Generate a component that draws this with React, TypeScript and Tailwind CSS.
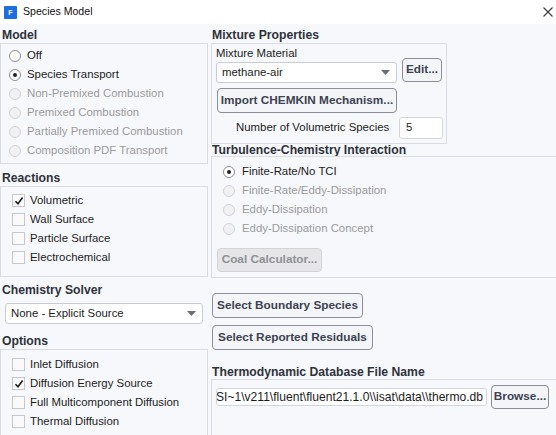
import React from "react";

const dim = "text-[#9b9b9b]";

function Radio({ checked = false, disabled = false }: { checked?: boolean; disabled?: boolean }) {
  return (
    <span
      className={`w-[12px] h-[12px] rounded-full border flex items-center justify-center shrink-0 ${
        disabled ? "border-[#d2d3d7] bg-[#f1f1f3]" : "border-[#8d8f95] bg-white"
      }`}
    >
      {checked && <span className="w-[4px] h-[4px] rounded-full bg-[#222]" />}
    </span>
  );
}

function Check({ checked = false }: { checked?: boolean }) {
  return (
    <span className="w-[13px] h-[13px] border border-[#c6c8ce] bg-[#fafafa] flex items-center justify-center shrink-0">
      {checked && (
        <svg width="10" height="10" viewBox="0 0 10 10">
          <path d="M1.5 5.2 L4 7.8 L8.6 1.6" fill="none" stroke="#1d1d1d" strokeWidth="1.6" />
        </svg>
      )}
    </span>
  );
}

function Caret() {
  return (
    <svg width="9" height="5" viewBox="0 0 9 5">
      <path d="M0 0 H9 L4.5 5 Z" fill="#6b6e75" />
    </svg>
  );
}

function Label({ children, className = "" }: { children: React.ReactNode; className?: string }) {
  return <div className={`font-bold text-[12.2px] text-[#2e323b] pl-[2px] whitespace-nowrap ${className}`}>{children}</div>;
}

function Btn({ children, className = "", disabled = false }: { children: React.ReactNode; className?: string; disabled?: boolean }) {
  return (
    <div
      className={`border rounded-[4px] flex items-center justify-center font-bold text-[11.8px] whitespace-nowrap ${
        disabled ? "border-[#d3d4d8] bg-[#e6e6e8] text-[#8f9196]" : "border-[#8c8f99] bg-[#f4f5f9] text-[#3c4250]"
      } ${className}`}
    >
      {children}
    </div>
  );
}

const models = [
  { t: "Off", c: false, d: false },
  { t: "Species Transport", c: true, d: false },
  { t: "Non-Premixed Combustion", c: false, d: true },
  { t: "Premixed Combustion", c: false, d: true },
  { t: "Partially Premixed Combustion", c: false, d: true },
  { t: "Composition PDF Transport", c: false, d: true },
];

const reactions = [
  { t: "Volumetric", c: true },
  { t: "Wall Surface", c: false },
  { t: "Particle Surface", c: false },
  { t: "Electrochemical", c: false },
];

const options = [
  { t: "Inlet Diffusion", c: false },
  { t: "Diffusion Energy Source", c: true },
  { t: "Full Multicomponent Diffusion", c: false },
  { t: "Thermal Diffusion", c: false },
];

const tci = [
  { t: "Finite-Rate/No TCI", c: true, d: false },
  { t: "Finite-Rate/Eddy-Dissipation", c: false, d: true },
  { t: "Eddy-Dissipation", c: false, d: true },
  { t: "Eddy-Dissipation Concept", c: false, d: true },
];

export default function App() {
  return (
    <div className="w-[556px] h-[435px] overflow-hidden bg-[#f7f8fc] font-['Liberation_Sans',Arial,sans-serif] text-[11.4px] text-[#1c1c1c]">
      {/* title bar */}
      <div className="h-[24px] bg-white flex items-center pl-[4px] pr-[3px]">
        <div className="w-[13px] h-[13px] bg-[#1d6fe0] rounded-[1px] flex items-center justify-center text-white text-[7px] font-bold leading-none">
          F
        </div>
        <span className="ml-[6px] text-[10.6px] text-[#111]">Species Model</span>
        <svg className="ml-auto" width="10" height="10" viewBox="0 0 10 10">
          <path d="M0.5 0.5 L9.5 9.5 M9.5 0.5 L0.5 9.5" stroke="#3a3a3a" strokeWidth="1.1" />
        </svg>
      </div>

      <div className="flex gap-[3px]">
        {/* left column */}
        <div className="w-[208px] shrink-0 flex flex-col">
          <Label className="mt-[4px] h-[15px] leading-[15px]">Model</Label>
          <div className="border border-[#d9dce6] h-[121px] pt-[2px]">
            {models.map((m) => (
              <div key={m.t} className="h-[19px] flex items-center pl-[8px] gap-[6px]">
                <Radio checked={m.c} disabled={m.d} />
                <span className={m.d ? dim : ""}>{m.t}</span>
              </div>
            ))}
          </div>

          <Label className="mt-[7px] h-[15px] leading-[15px]">Reactions</Label>
          <div className="border border-[#d9dce6] h-[91px] pt-[4px]">
            {reactions.map((r) => (
              <div key={r.t} className="h-[19px] flex items-center pl-[11px] gap-[5px]">
                <Check checked={r.c} />
                <span>{r.t}</span>
              </div>
            ))}
          </div>

          <Label className="mt-[6px] h-[15px] leading-[15px]">Chemistry Solver</Label>
          <div className="mt-[5px] ml-[5px] w-[198px] h-[21px] bg-white border border-[#c9ccd6] rounded-[3px] flex items-center pl-[5px] pr-[6px]">
            <span>None - Explicit Source</span>
            <span className="ml-auto">
              <Caret />
            </span>
          </div>

          <Label className="mt-[10px] h-[15px] leading-[15px]">Options</Label>
          <div className="border border-[#d9dce6] h-[100px] pt-[5px]">
            {options.map((o) => (
              <div key={o.t} className="h-[19px] flex items-center pl-[11px] gap-[5px]">
                <Check checked={o.c} />
                <span>{o.t}</span>
              </div>
            ))}
          </div>
        </div>

        {/* right column */}
        <div className="flex-1 flex flex-col -mr-[3px]">
          <Label className="mt-[4px] h-[15px] leading-[15px] !pl-[1px]">Mixture Properties</Label>
          <div className="w-[236px] h-[101px] border border-[#d9dce6] pl-[4px] pt-[2px]">
            <div className="flex items-end">
              <div className="flex flex-col w-[181px]">
                <div className="h-[16px] leading-[15px]">Mixture Material</div>
                <div className="h-[21px] bg-white border border-[#c9ccd6] rounded-[3px] flex items-center pl-[5px] pr-[6px]">
                  <span>methane-air</span>
                  <span className="ml-auto">
                    <Caret />
                  </span>
                </div>
              </div>
              <Btn className="ml-[5px] w-[40px] h-[24px] mb-[1px]">Edit...</Btn>
            </div>
            <Btn className="mt-[5px] ml-[1px] w-[180px] h-[25px]">Import CHEMKIN Mechanism...</Btn>
            <div className="mt-[4px] flex items-center h-[22px]">
              <span className="w-[183px] pl-[20px]">Number of Volumetric Species</span>
              <div className="w-[44px] h-[22px] bg-white border border-[#d4d6de] rounded-[3px] flex items-center pl-[6px]">5</div>
            </div>
          </div>

          <Label className="h-[12px] leading-[12px] !pl-[1px]">Turbulence-Chemistry Interaction</Label>
          <div className="h-[122px] border border-[#d9dce6] pt-[5px]">
            {tci.map((m) => (
              <div key={m.t} className="h-[19px] flex items-center pl-[11px] gap-[7px]">
                <Radio checked={m.c} disabled={m.d} />
                <span className={m.d ? dim : ""}>{m.t}</span>
              </div>
            ))}
            <Btn disabled className="mt-[10px] ml-[5px] w-[105px] h-[24px]">
              Coal Calculator...
            </Btn>
          </div>

          <Btn className="mt-[15px] ml-[1px] w-[151px] h-[25px]">Select Boundary Species</Btn>
          <Btn className="mt-[7px] ml-[1px] w-[161px] h-[25px]">Select Reported Residuals</Btn>

          <Label className="mt-[15px] h-[14px] leading-[14px] !pl-[1px]">Thermodynamic Database File Name</Label>
          <div className="h-[60px] border border-[#d9dce6] pt-[5px]">
            <div className="flex items-center">
              <div className="ml-[4px] w-[271px] h-[18px] bg-white border border-[#d4d6de] rounded-[3px] overflow-hidden flex items-center justify-end pr-[3px] whitespace-nowrap text-[12.1px]">
                {"SI~1\\v211\\fluent\\fluent21.1.0\\\\isat\\data\\\\thermo.db"}
              </div>
              <Btn className="ml-[4px] w-[58px] h-[24px]">Browse...</Btn>
            </div>
          </div>
        </div>
      </div>
    </div>
  );
}
